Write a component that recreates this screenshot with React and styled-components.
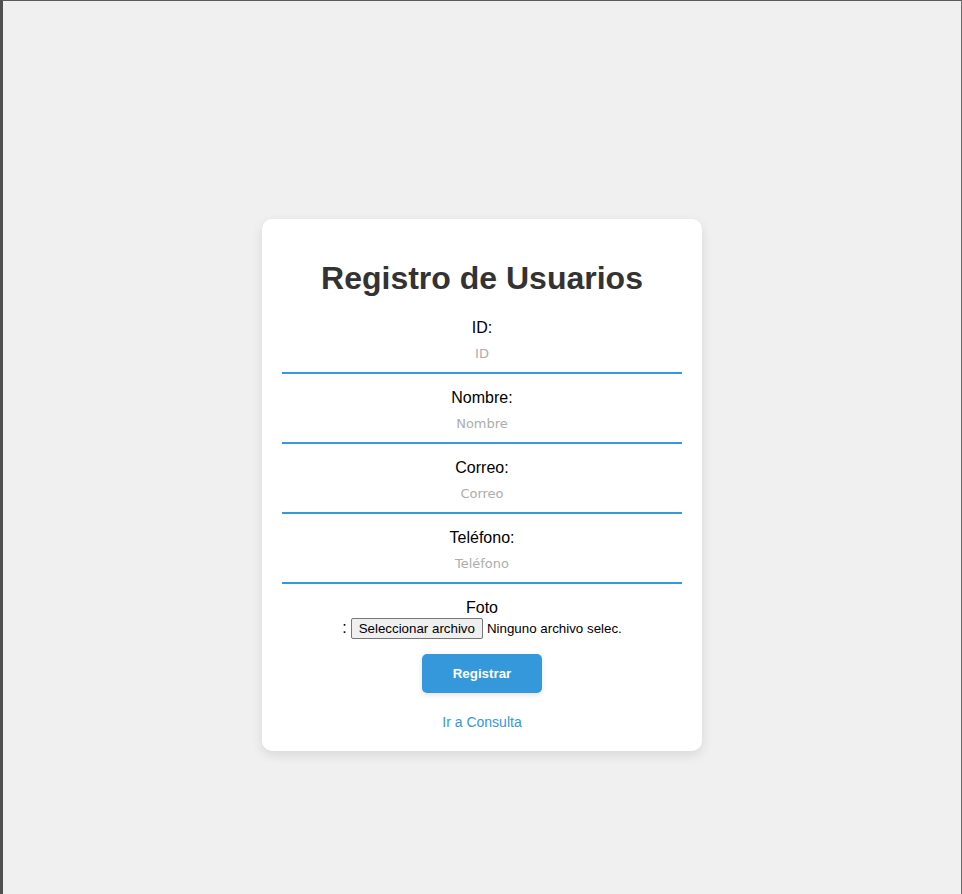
import React from "react";
import styled, { createGlobalStyle } from "styled-components";

const GlobalStyle = createGlobalStyle`
  * {
    box-sizing: border-box;
  }

  body {
    margin: 0;
    background: #f0f0f0;
    font-family: "Liberation Sans", Arial, sans-serif;
  }
`;

const Page = styled.div`
  min-height: 100vh;
  border-top: 1px solid #5a5a5a;
  border-left: 3px solid #505050;
  border-right: 1px solid #6a6a6a;
  display: flex;
  justify-content: center;
  align-items: flex-start;
  padding-top: 218px;
`;

const Card = styled.div`
  width: 440px;
  background: #ffffff;
  border-radius: 10px;
  box-shadow: 0 4px 12px rgba(0, 0, 0, 0.1);
  padding: 20px 20px 21px;
  text-align: center;
`;

const Title = styled.h1`
  margin: 21px 0 22px;
  font-size: 32px;
  line-height: 37px;
  font-weight: bold;
  color: #333333;
`;

const Field = styled.div`
  display: flex;
  flex-direction: column;
  align-items: stretch;
  margin-bottom: 15px;
`;

const Label = styled.label`
  display: block;
  font-size: 16px;
  line-height: 18px;
  color: #000000;
`;

const Input = styled.input`
  display: block;
  width: 100%;
  padding: 9px 10px 10px;
  border: none;
  border-bottom: 2px solid #3498db;
  outline: none;
  background: transparent;
  text-align: center;
  font-family: "DejaVu Sans", Verdana, sans-serif;
  font-size: 13px;
  line-height: 16px;
  color: #333333;

  &::placeholder {
    color: #adadad;
  }
`;

const FileRow = styled.div`
  display: flex;
  justify-content: center;
  align-items: center;
  height: 22px;
  font-size: 16px;
`;

const Colon = styled.span`
  margin-right: 4px;
`;

const FileButton = styled.span`
  display: inline-flex;
  align-items: center;
  height: 21px;
  padding: 0 7px;
  border: 1px solid #767676;
  border-radius: 2px;
  background: #efefef;
  font-size: 13.33px;
  color: #000000;
`;

const FileName = styled.span`
  margin-left: 4px;
  font-size: 13.33px;
  color: #000000;
`;

const SubmitButton = styled.button`
  display: block;
  width: 120px;
  height: 39px;
  margin: 15px auto 0;
  border: none;
  border-radius: 5px;
  background: #3498db;
  box-shadow: 0 2px 5px rgba(0, 0, 0, 0.12);
  color: #ffffff;
  font-family: "Liberation Sans", Arial, sans-serif;
  font-size: 13.33px;
  font-weight: bold;
  cursor: pointer;
`;

const LinkWrap = styled.div`
  margin-top: 21px;
  line-height: 16px;
`;

const NavLink = styled.a`
  font-size: 14px;
  color: #3498db;
  text-decoration: none;
`;

const fields = [
  { id: "id", label: "ID:", placeholder: "ID" },
  { id: "nombre", label: "Nombre:", placeholder: "Nombre" },
  { id: "correo", label: "Correo:", placeholder: "Correo" },
  { id: "telefono", label: "Teléfono:", placeholder: "Teléfono" },
];

export default function App() {
  return (
    <>
      <GlobalStyle />
      <Page>
        <Card>
          <Title>Registro de Usuarios</Title>
          <form onSubmit={(e) => e.preventDefault()}>
            {fields.map((f) => (
              <Field key={f.id}>
                <Label htmlFor={f.id}>{f.label}</Label>
                <Input id={f.id} placeholder={f.placeholder} />
              </Field>
            ))}
            <Label>Foto</Label>
            <FileRow>
              <Colon>:</Colon>
              <FileButton>Seleccionar archivo</FileButton>
              <FileName>Ninguno archivo selec.</FileName>
            </FileRow>
            <SubmitButton type="submit">Registrar</SubmitButton>
          </form>
          <LinkWrap>
            <NavLink href="#">Ir a Consulta</NavLink>
          </LinkWrap>
        </Card>
      </Page>
    </>
  );
}
